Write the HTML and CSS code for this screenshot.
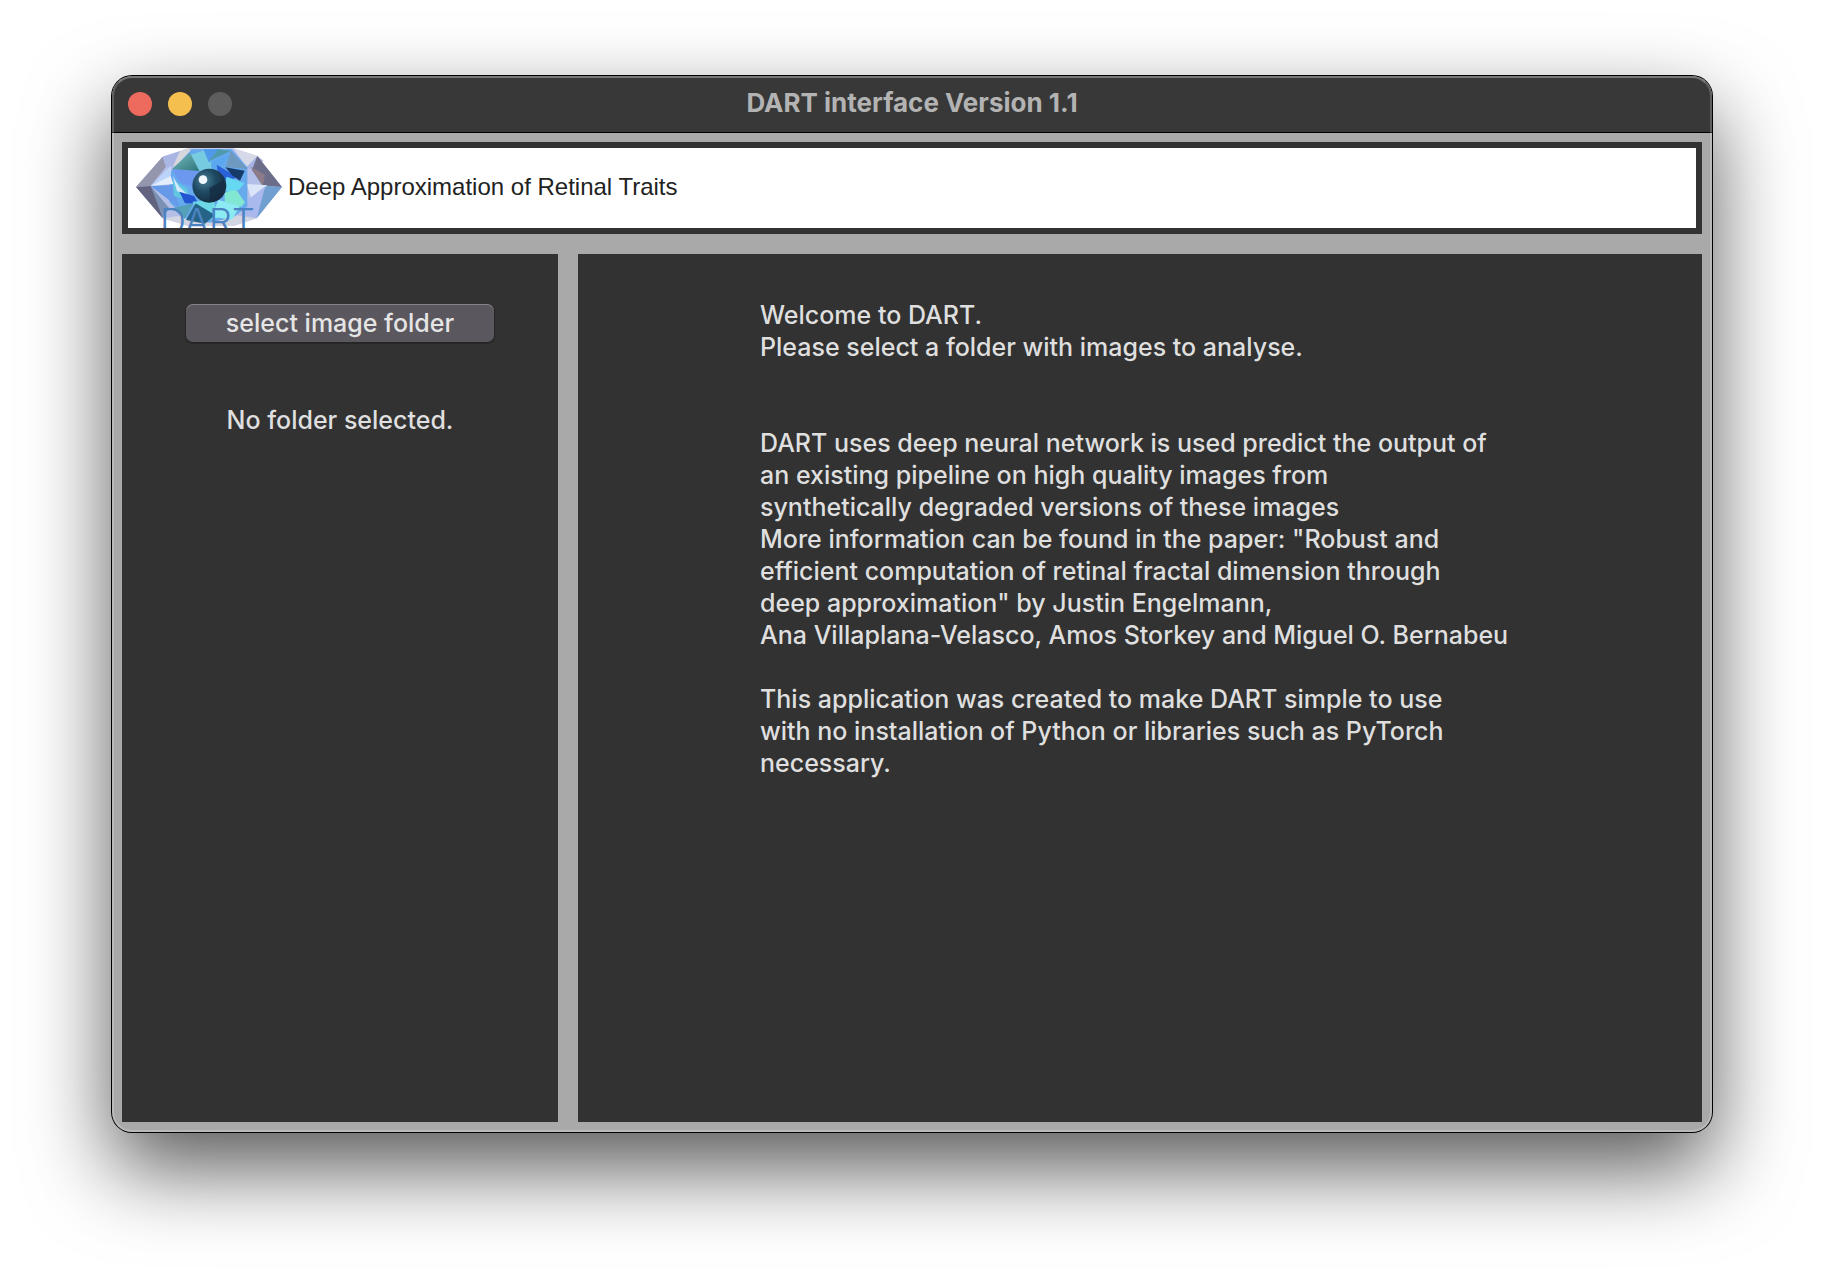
FILE: index.html
```html
<!DOCTYPE html>
<html lang="en">
<head>
<meta charset="utf-8">
<title>DART interface Version 1.1</title>
<link rel="stylesheet" href="styles.css">
</head>
<body>
<main class="window">
  <header class="titlebar">
    <div class="lights">
      <button class="light light-close" type="button" aria-label="Close"></button>
      <button class="light light-minimize" type="button" aria-label="Minimize"></button>
      <button class="light light-zoom" type="button" aria-label="Zoom" disabled></button>
    </div>
    <h1 class="title">DART interface Version 1.1</h1>
  </header>
  <div class="content">
    <section class="banner">
      <svg class="logo" viewBox="18 24 438 240" role="img" aria-label="DART logo">
        <defs>
          <filter id="soft" x="-5%" y="-5%" width="110%" height="110%"><feGaussianBlur stdDeviation="2"/></filter>
          <radialGradient id="pupil" cx="0.35" cy="0.35" r="0.75">
            <stop offset="0" stop-color="#4b8098"/><stop offset="0.45" stop-color="#1f4a64"/><stop offset="1" stop-color="#142739"/>
          </radialGradient>
          <linearGradient id="teal" x1="0" y1="0" x2="1" y2="1">
            <stop offset="0" stop-color="#79bfc0"/><stop offset="1" stop-color="#2d7378"/>
          </linearGradient>
        </defs>
        <g filter="url(#soft)">
          <path fill="#b4bfe8" d="M18 141 98 50 175 25H310L382 48 456 141 380 235 310 258H175L98 235Z"/>
          <path fill="#d3d5e2" d="M98 235 165 225 310 225 380 235 310 258H175Z"/>
          <path fill="#9496ad" d="M18 141 98 50 108 80 62 138Z"/>
          <path fill="#a9b6e4" d="M98 50 150 34 128 82 108 80Z"/>
          <path fill="#d5d7dc" d="M150 34 178 25 185 48 128 82Z"/>
          <path fill="#62647e" d="M18 141 62 138 94 190 98 235Z"/>
          <path fill="#7a91b4" d="M62 138 118 205 98 235 80 185Z"/>
          <path fill="#d6d9e8" d="M310 25 382 48 350 82Z"/>
          <path fill="#a4b3e2" d="M350 82 382 48 400 62 366 90Z"/>
          <path fill="#6c6d89" d="M382 48 456 141 398 137 366 90Z"/>
          <path fill="#8d7b87" d="M362 80 405 105 398 137Z"/>
          <path fill="#719fd0" d="M398 137 456 141 380 235Z"/>
          <path fill="#dce5f8" d="M350 132 412 136 365 180Z"/>
          <path fill="#a9b9ee" d="M350 182 406 138 380 235 345 225Z"/>
          <path fill="#66a9ed" d="M185 28H305L352 82V200L310 232 240 248 165 235 118 185V100Z"/>
          <path fill="#bcd3fa" d="M62 138 124 76 122 114Z"/>
          <path fill="#e4edfb" d="M62 138 122 108 130 132Z"/>
          <path fill="#669ae8" d="M62 138 130 135 148 204Z"/>
          <path fill="#77cbe0" d="M180 45 235 27 248 92 200 94Z"/>
          <path fill="url(#teal)" d="M126 87 180 38 208 93 165 95Z"/>
          <path fill="#6c98ef" d="M126 87 208 93 192 140 150 128Z"/>
          <path fill="#4f9be9" d="M220 28 270 27 237 68Z"/>
          <path fill="#509aac" d="M238 62 265 28 302 32 282 43Z"/>
          <path fill="#5ba8f0" d="M244 65 300 42 270 85 245 95Z"/>
          <path fill="#7099bf" d="M302 32 354 88 288 80Z"/>
          <path fill="#2962da" d="M260 74 320 110 290 130 264 102Z"/>
          <path fill="#183a69" d="M286 82 344 92 330 122 306 106Z"/>
          <path fill="#62c8e2" d="M128 119 172 146 180 182 132 168Z"/>
          <path fill="#d3e9fb" d="M128 108 148 141 184 174 141 153Z"/>
          <path fill="#2355cf" d="M148 155 192 168 206 191 165 190Z"/>
          <path fill="#55a0b9" d="M127 205 190 190 164 237Z"/>
          <path fill="#6dd8e6" d="M188 185 250 179 266 233 210 245Z"/>
          <path fill="#82e7d2" d="M284 160 315 145 345 187 334 200 284 185Z"/>
          <path fill="#66d8f1" d="M290 110 344 130 326 150 276 155Z"/>
          <path fill="#8ceaf2" d="M265 179 330 198 306 239 246 230Z"/>
          <path fill="#276489" d="M197 190 255 225 225 251 168 240Z"/>
          <circle cx="238" cy="137" r="51" fill="url(#pupil)"/>
          <path fill="#172b42" opacity="0.7" d="M238 145 282 120 278 170 240 185Z"/>
          <circle cx="219" cy="119" r="13" fill="#f1f8fd"/>
        </g>
        <text class="logo-text" x="90" y="282">DART</text>
      </svg>
      <p class="tagline">Deep Approximation of Retinal Traits</p>
    </section>
    <div class="panels">
      <section class="panel sidebar">
        <button class="select" type="button">select image folder</button>
        <p class="status">No folder selected.</p>
      </section>
      <section class="panel info">
        <div class="info-text">
          <p>Welcome to DART.<br>Please select a folder with images to analyse.</p>
          <p class="about">DART uses deep neural network is used predict the output of<br>an existing pipeline on high quality images from<br>synthetically degraded versions of these images<br>More information can be found in the paper: "Robust and<br>efficient computation of retinal fractal dimension through<br>deep approximation" by Justin Engelmann,<br>Ana Villaplana-Velasco, Amos Storkey and Miguel O. Bernabeu</p>
          <p class="purpose">This application was created to make DART simple to use<br>with no installation of Python or libraries such as PyTorch<br>necessary.</p>
        </div>
      </section>
    </div>
  </div>
</main>
</body>
</html>
```
FILE: styles.css
```css
* { box-sizing: border-box; }

body {
  margin: 0;
  min-height: 100vh;
  padding: 76px 112px 148px;
  display: flex;
  background: #fff;
  color: #dfdfdf;
  font: 500 25px/32px Inter, "Liberation Sans", sans-serif;
}

p, h1 { margin: 0; }

.window {
  position: relative;
  flex: 1;
  display: flex;
  flex-direction: column;
  border-radius: 20px;
  background: #a9a9a9;
  box-shadow: 0 0 0 1px #000, 0 36px 84px rgba(0, 0, 0, 0.66);
}

/* Light inner rim around the whole window */
.window::after {
  content: "";
  position: absolute;
  inset: 0;
  border: 2px solid rgba(255, 255, 255, 0.2);
  border-top-color: rgba(255, 255, 255, 0.32);
  border-radius: 20px;
  pointer-events: none;
}

.titlebar {
  display: grid;
  grid-template-columns: 1fr auto 1fr;
  align-items: center;
  height: 57px;
  padding: 0 16px;
  border-bottom: 1px solid #000;
  border-radius: 20px 20px 0 0;
  background: #383838;
}

.lights { display: flex; gap: 16px; }

.light {
  width: 24px;
  height: 24px;
  padding: 0;
  border: 0;
  border-radius: 50%;
}

.light-close { background: #ed6a5e; }
.light-minimize { background: #f5bf4f; }
.light-zoom { background: #5d5d5d; }

.title {
  padding-bottom: 2px;
  color: #b3b3b3;
  font-size: 26px;
  font-weight: 700;
}

.content {
  flex: 1;
  display: flex;
  flex-direction: column;
  gap: 20px;
  padding: 9px 10px 10px;
}

.banner {
  display: flex;
  align-items: center;
  gap: 6px;
  padding-left: 8px;
  border: 6px solid #323232;
  background: #fff;
}

.logo { display: block; width: 146px; height: 80px; }

.logo-text {
  fill: #4b83c2;
  font-family: Inter, sans-serif;
  font-size: 108px;
  font-weight: 300;
}

.tagline {
  padding-bottom: 2px;
  color: #222;
  font-family: "Liberation Sans", Arial, sans-serif;
  font-size: 24px;
  font-weight: 400;
}

.panels {
  flex: 1;
  display: grid;
  grid-template-columns: 436fr 1124fr;
  gap: 20px;
}

.panel { background: #323232; }

.sidebar {
  display: flex;
  flex-direction: column;
  align-items: center;
  gap: 62px;
  padding-top: 50px;
}

.select {
  width: 308px;
  height: 38px;
  padding: 0;
  border: 0;
  border-radius: 7px;
  background: #5a575e;
  box-shadow: inset 0 1px #858387, 0 1px 1px 1px #262626;
  color: #e5e5e5;
  font: inherit;
}

.info {
  display: flex;
  justify-content: center;
  padding: 45px 20px;
}

.info-text { flex: 0 1 760px; }

.about { margin-top: 64px; }
.purpose { margin-top: 32px; }
```
